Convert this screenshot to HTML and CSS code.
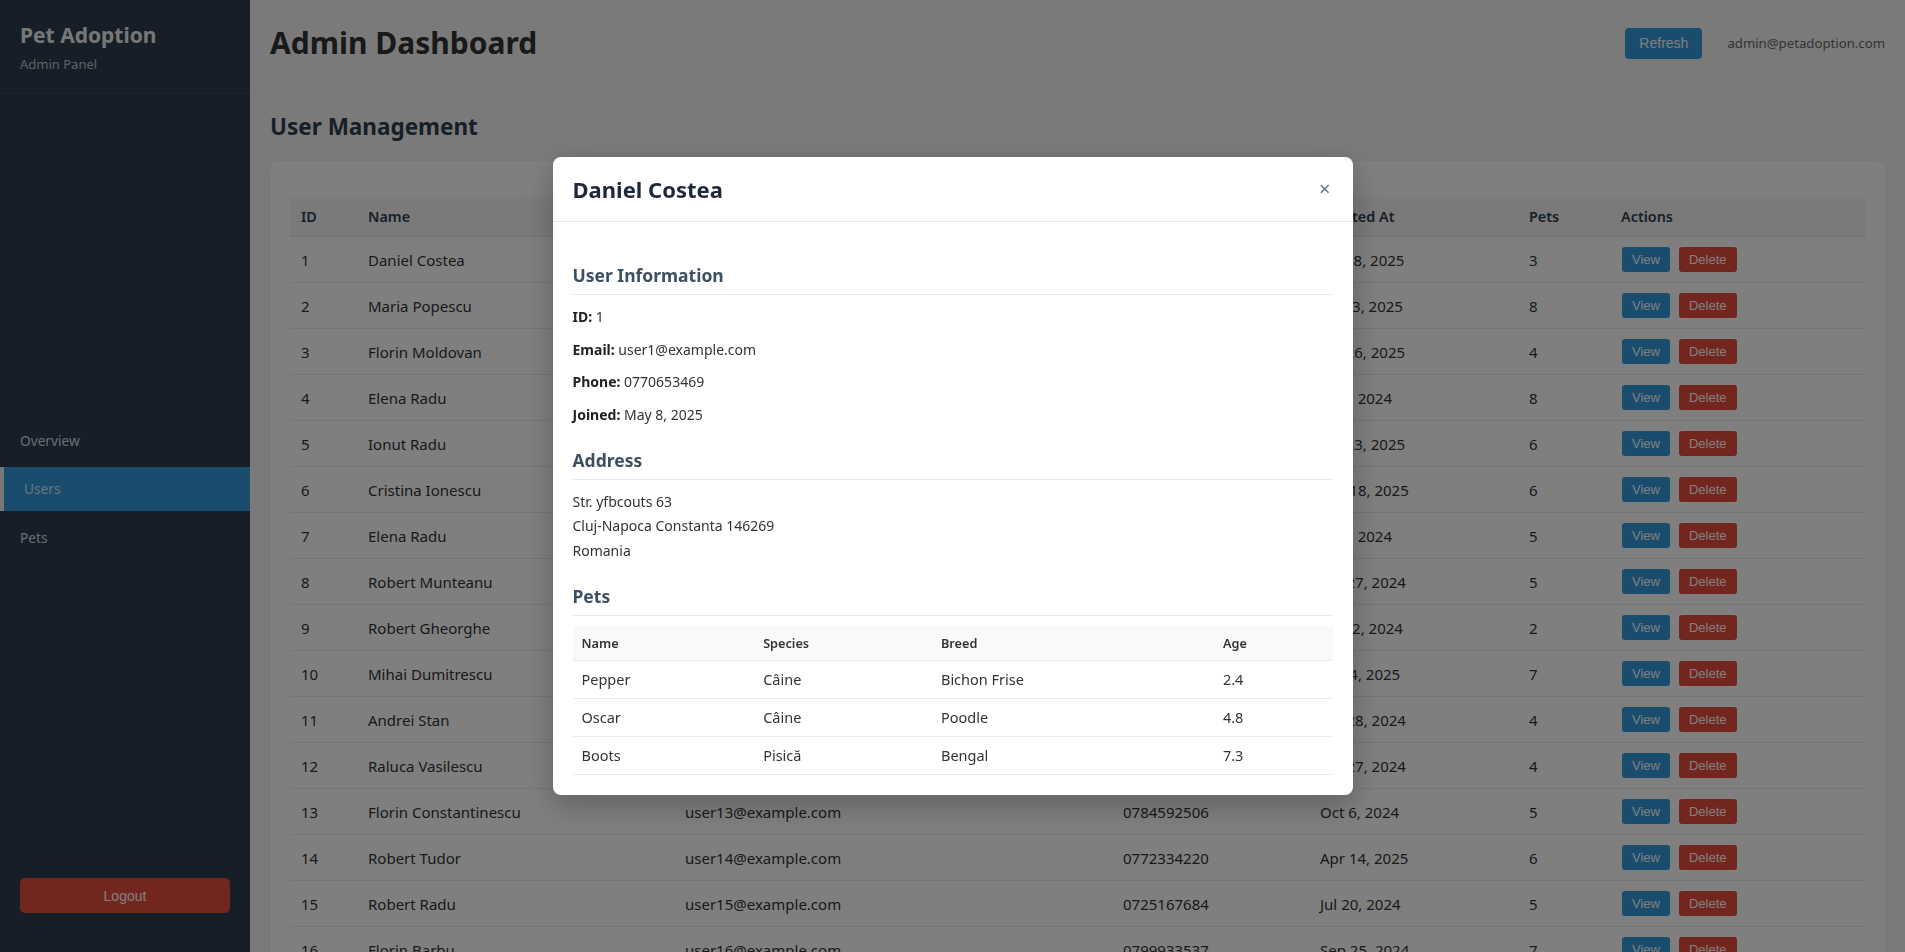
FILE: index.html
```html
<!DOCTYPE html>
<html lang="en">
<head>
<meta charset="utf-8">
<title>Admin Dashboard - Pet Adoption</title>
<link rel="stylesheet" href="styles.css">
</head>
<body>
<div class="app">
  <aside class="sidebar">
    <div class="sidebar-header">
      <h2 class="brand">Pet Adoption</h2>
      <p class="brand-sub">Admin Panel</p>
    </div>
    <nav class="nav">
      <a class="nav-item">Overview</a>
      <a class="nav-item active">Users</a>
      <a class="nav-item">Pets</a>
    </nav>
    <div class="sidebar-footer">
      <button class="logout-btn">Logout</button>
    </div>
  </aside>

  <main class="main">
    <header class="topbar">
      <h1 class="page-title">Admin Dashboard</h1>
      <div class="topbar-right">
        <button class="btn btn-primary btn-refresh">Refresh</button>
        <span class="admin-email">admin@petadoption.com</span>
      </div>
    </header>

    <section class="section">
      <h2 class="section-title">User Management</h2>
      <div class="card">
        <table class="users-table">
          <colgroup>
            <col class="c-id"><col class="c-name"><col class="c-email"><col class="c-phone"><col class="c-created"><col class="c-pets"><col class="c-actions">
          </colgroup>
          <thead>
            <tr><th>ID</th><th>Name</th><th>Email</th><th>Phone</th><th>Created At</th><th>Pets</th><th>Actions</th></tr>
          </thead>
          <tbody>
            <tr><td>1</td><td>Daniel Costea</td><td>user1@example.com</td><td>0770653469</td><td>May 8, 2025</td><td>3</td><td><div class="actions"><button class="btn btn-sm btn-primary">View</button><button class="btn btn-sm btn-danger">Delete</button></div></td></tr>
            <tr><td>2</td><td>Maria Popescu</td><td>user2@example.com</td><td>0745213876</td><td>Mar 3, 2025</td><td>8</td><td><div class="actions"><button class="btn btn-sm btn-primary">View</button><button class="btn btn-sm btn-danger">Delete</button></div></td></tr>
            <tr><td>3</td><td>Florin Moldovan</td><td>user3@example.com</td><td>0731498205</td><td>Jan 26, 2025</td><td>4</td><td><div class="actions"><button class="btn btn-sm btn-primary">View</button><button class="btn btn-sm btn-danger">Delete</button></div></td></tr>
            <tr><td>4</td><td>Elena Radu</td><td>user4@example.com</td><td>0766120934</td><td>Jul 9, 2024</td><td>8</td><td><div class="actions"><button class="btn btn-sm btn-primary">View</button><button class="btn btn-sm btn-danger">Delete</button></div></td></tr>
            <tr><td>5</td><td>Ionut Radu</td><td>user5@example.com</td><td>0724587361</td><td>Jan 23, 2025</td><td>6</td><td><div class="actions"><button class="btn btn-sm btn-primary">View</button><button class="btn btn-sm btn-danger">Delete</button></div></td></tr>
            <tr><td>6</td><td>Cristina Ionescu</td><td>user6@example.com</td><td>0753901248</td><td>Feb 18, 2025</td><td>6</td><td><div class="actions"><button class="btn btn-sm btn-primary">View</button><button class="btn btn-sm btn-danger">Delete</button></div></td></tr>
            <tr><td>7</td><td>Elena Radu</td><td>user7@example.com</td><td>0789345102</td><td>Jul 4, 2024</td><td>5</td><td><div class="actions"><button class="btn btn-sm btn-primary">View</button><button class="btn btn-sm btn-danger">Delete</button></div></td></tr>
            <tr><td>8</td><td>Robert Munteanu</td><td>user8@example.com</td><td>0712658493</td><td>Jun 27, 2024</td><td>5</td><td><div class="actions"><button class="btn btn-sm btn-primary">View</button><button class="btn btn-sm btn-danger">Delete</button></div></td></tr>
            <tr><td>9</td><td>Robert Gheorghe</td><td>user9@example.com</td><td>0740287615</td><td>Mar 2, 2024</td><td>2</td><td><div class="actions"><button class="btn btn-sm btn-primary">View</button><button class="btn btn-sm btn-danger">Delete</button></div></td></tr>
            <tr><td>10</td><td>Mihai Dumitrescu</td><td>user10@example.com</td><td>0728836450</td><td>Feb 4, 2025</td><td>7</td><td><div class="actions"><button class="btn btn-sm btn-primary">View</button><button class="btn btn-sm btn-danger">Delete</button></div></td></tr>
            <tr><td>11</td><td>Andrei Stan</td><td>user11@example.com</td><td>0761574029</td><td>Jun 28, 2024</td><td>4</td><td><div class="actions"><button class="btn btn-sm btn-primary">View</button><button class="btn btn-sm btn-danger">Delete</button></div></td></tr>
            <tr><td>12</td><td>Raluca Vasilescu</td><td>user12@example.com</td><td>0734092871</td><td>Jun 27, 2024</td><td>4</td><td><div class="actions"><button class="btn btn-sm btn-primary">View</button><button class="btn btn-sm btn-danger">Delete</button></div></td></tr>
            <tr><td>13</td><td>Florin Constantinescu</td><td>user13@example.com</td><td>0784592506</td><td>Oct 6, 2024</td><td>5</td><td><div class="actions"><button class="btn btn-sm btn-primary">View</button><button class="btn btn-sm btn-danger">Delete</button></div></td></tr>
            <tr><td>14</td><td>Robert Tudor</td><td>user14@example.com</td><td>0772334220</td><td>Apr 14, 2025</td><td>6</td><td><div class="actions"><button class="btn btn-sm btn-primary">View</button><button class="btn btn-sm btn-danger">Delete</button></div></td></tr>
            <tr><td>15</td><td>Robert Radu</td><td>user15@example.com</td><td>0725167684</td><td>Jul 20, 2024</td><td>5</td><td><div class="actions"><button class="btn btn-sm btn-primary">View</button><button class="btn btn-sm btn-danger">Delete</button></div></td></tr>
            <tr><td>16</td><td>Florin Barbu</td><td>user16@example.com</td><td>0799933537</td><td>Sep 25, 2024</td><td>7</td><td><div class="actions"><button class="btn btn-sm btn-primary">View</button><button class="btn btn-sm btn-danger">Delete</button></div></td></tr>
          </tbody>
        </table>
      </div>
    </section>
  </main>
</div>

<div class="overlay">
  <div class="modal">
    <div class="modal-header">
      <h2 class="modal-title">Daniel Costea</h2>
      <button class="modal-close">×</button>
    </div>
    <div class="modal-body">
      <h3 class="modal-section">User Information</h3>
      <p class="info"><strong>ID:</strong> 1</p>
      <p class="info"><strong>Email:</strong> user1@example.com</p>
      <p class="info"><strong>Phone:</strong> 0770653469</p>
      <p class="info"><strong>Joined:</strong> May 8, 2025</p>

      <h3 class="modal-section">Address</h3>
      <p class="address">Str. yfbcouts 63<br>Cluj-Napoca Constanta 146269<br>Romania</p>

      <h3 class="modal-section">Pets</h3>
      <table class="pets-table">
        <colgroup><col class="p-name"><col class="p-species"><col class="p-breed"><col class="p-age"></colgroup>
        <thead>
          <tr><th>Name</th><th>Species</th><th>Breed</th><th>Age</th></tr>
        </thead>
        <tbody>
          <tr><td>Pepper</td><td>Câine</td><td>Bichon Frise</td><td>2.4</td></tr>
          <tr><td>Oscar</td><td>Câine</td><td>Poodle</td><td>4.8</td></tr>
          <tr><td>Boots</td><td>Pisică</td><td>Bengal</td><td>7.3</td></tr>
        </tbody>
      </table>
    </div>
  </div>
</div>
</body>
</html>
```

FILE: styles.css
```css
* { box-sizing: border-box; }

html, body {
  margin: 0;
  padding: 0;
  height: 100%;
}

body {
  font-family: "Noto Sans", "Open Sans", sans-serif;
  color: #333;
  background: #f5f5f5;
  overflow: hidden;
}

.app {
  display: flex;
  height: 100vh;
  overflow: hidden;
}

/* Sidebar */
.sidebar {
  width: 250px;
  flex: 0 0 250px;
  height: 100vh;
  background: #2c3e50;
  color: #ecf0f1;
  display: flex;
  flex-direction: column;
}

.sidebar-header {
  padding: 21px 20px 20px;
  border-bottom: 1px solid #3a4b5e;
}

.brand {
  margin: 0 0 6px;
  font-size: 21px;
  line-height: 28px;
  font-weight: 700;
  color: #ecf0f1;
}

.brand-sub {
  margin: 0;
  font-size: 13px;
  line-height: 18px;
  color: #bdc3c7;
}

.nav {
  flex: 1;
  display: flex;
  flex-direction: column;
  justify-content: center;
  gap: 4.5px;
  padding-top: 6px;
}

.nav-item {
  display: block;
  padding: 12px 20px;
  font-size: 13.7px;
  line-height: 20px;
  color: #d5dbe1;
  text-decoration: none;
}

.nav-item.active {
  background: #3498db;
  border-left: 4px solid #ecf0f1;
  color: #d6eaf8;
}

.sidebar-footer {
  padding: 0 20px 39px;
}

.logout-btn {
  display: block;
  width: 100%;
  height: 35px;
  border: none;
  border-radius: 5px;
  background: #e74c3c;
  color: #fff;
  font-family: "Liberation Sans", Arial, sans-serif;
  font-size: 14px;
}

/* Main */
.main {
  flex: 1;
  min-width: 0;
  padding: 20px;
  overflow: hidden;
  background: #f5f5f5;
}

.topbar {
  display: flex;
  justify-content: space-between;
  align-items: center;
  padding: 4px 0 15px;
  border-bottom: 1px solid #ececec;
  margin-bottom: 34px;
}

.page-title {
  margin: 0;
  font-size: 30px;
  line-height: 38px;
  font-weight: 700;
  color: #333;
}

.topbar-right {
  display: flex;
  align-items: center;
  gap: 25px;
}

.btn {
  border: none;
  color: #fff;
  font-family: "Liberation Sans", Arial, sans-serif;
  cursor: pointer;
}

.btn-primary { background: #3498db; }
.btn-danger { background: #e74c3c; }

.btn-refresh {
  padding: 7px 14px;
  font-size: 14px;
  line-height: 17px;
  border-radius: 4px;
}

.admin-email {
  font-size: 13.2px;
  color: #666;
}

.section-title {
  margin: 0 0 20px;
  font-size: 22.5px;
  line-height: 29px;
  font-weight: 700;
  color: #2c3e50;
}

.card {
  background: #fff;
  border-radius: 8px;
  padding: 36px 20px 20px;
  box-shadow: 0 1px 3px rgba(0, 0, 0, 0.06);
}

.users-table {
  width: 100%;
  border-collapse: collapse;
  table-layout: fixed;
}

.c-id { width: 67px; }
.c-name { width: 317px; }
.c-email { width: 438px; }
.c-phone { width: 197px; }
.c-created { width: 209px; }
.c-pets { width: 92px; }
.c-actions { width: 255px; }

.users-table th {
  text-align: left;
  padding: 9px 12px 9px 11px;
  font-size: 14.4px;
  line-height: 21px;
  font-weight: 600;
  color: #2c3e50;
  background: #f4f5f6;
  border-bottom: 1px solid #e6e6e6;
}

.users-table td {
  padding: 10px 12px 10px 11px;
  font-size: 15px;
  line-height: 24px;
  color: #333;
  border-bottom: 1px solid #ececec;
  vertical-align: middle;
  white-space: nowrap;
}

.users-table td:last-child {
  padding-left: 12px;
}

.actions {
  display: flex;
  gap: 9px;
}

.btn-sm {
  padding: 5px 10px;
  font-size: 13px;
  line-height: 15px;
  border-radius: 3px;
}

/* Modal */
.overlay {
  position: fixed;
  inset: 0;
  background: rgba(0, 0, 0, 0.5);
  display: flex;
  align-items: center;
  justify-content: center;
  z-index: 10;
}

.modal {
  width: 800px;
  background: #fff;
  border-radius: 8px;
  box-shadow: 0 10px 30px rgba(0, 0, 0, 0.25);
  overflow: hidden;
}

.modal-header {
  display: flex;
  justify-content: space-between;
  align-items: center;
  padding: 20px;
  border-bottom: 1px solid #e5e7eb;
}

.modal-title {
  margin: 0;
  font-size: 22px;
  line-height: 24px;
  font-weight: 700;
  color: #1e293b;
}

.modal-close {
  background: none;
  border: none;
  padding: 0 2px 0 0;
  font-family: "Noto Sans", sans-serif;
  font-size: 20px;
  line-height: 24px;
  color: #64748b;
}

.modal-body {
  padding: 20px;
}

.modal-section {
  margin: 20px 0 10px;
  padding-bottom: 5px;
  border-bottom: 1px solid #e5e7eb;
  font-size: 17.5px;
  line-height: 27px;
  font-weight: 700;
  color: #3d4f63;
}

.info {
  margin: 8.5px 0;
  font-size: 14px;
  line-height: 24px;
  color: #333;
}

.info strong {
  font-weight: 700;
  color: #222;
}

.address {
  margin: 8.5px 0;
  font-size: 14px;
  line-height: 24.5px;
  color: #333;
}

.pets-table {
  width: 100%;
  border-collapse: collapse;
  table-layout: fixed;
}

.p-name { width: 23.9%; }
.p-species { width: 23.4%; }
.p-breed { width: 37.1%; }
.p-age { width: 15.6%; }

.pets-table th {
  text-align: left;
  padding: 8px 9px;
  font-size: 12.7px;
  line-height: 18px;
  font-weight: 600;
  color: #333;
  background: #f8f9fa;
  border-bottom: 1px solid #e9ecef;
}

.pets-table td {
  padding: 9px;
  font-size: 14.5px;
  line-height: 19px;
  color: #333;
  border-bottom: 1px solid #e9ecef;
}
```
